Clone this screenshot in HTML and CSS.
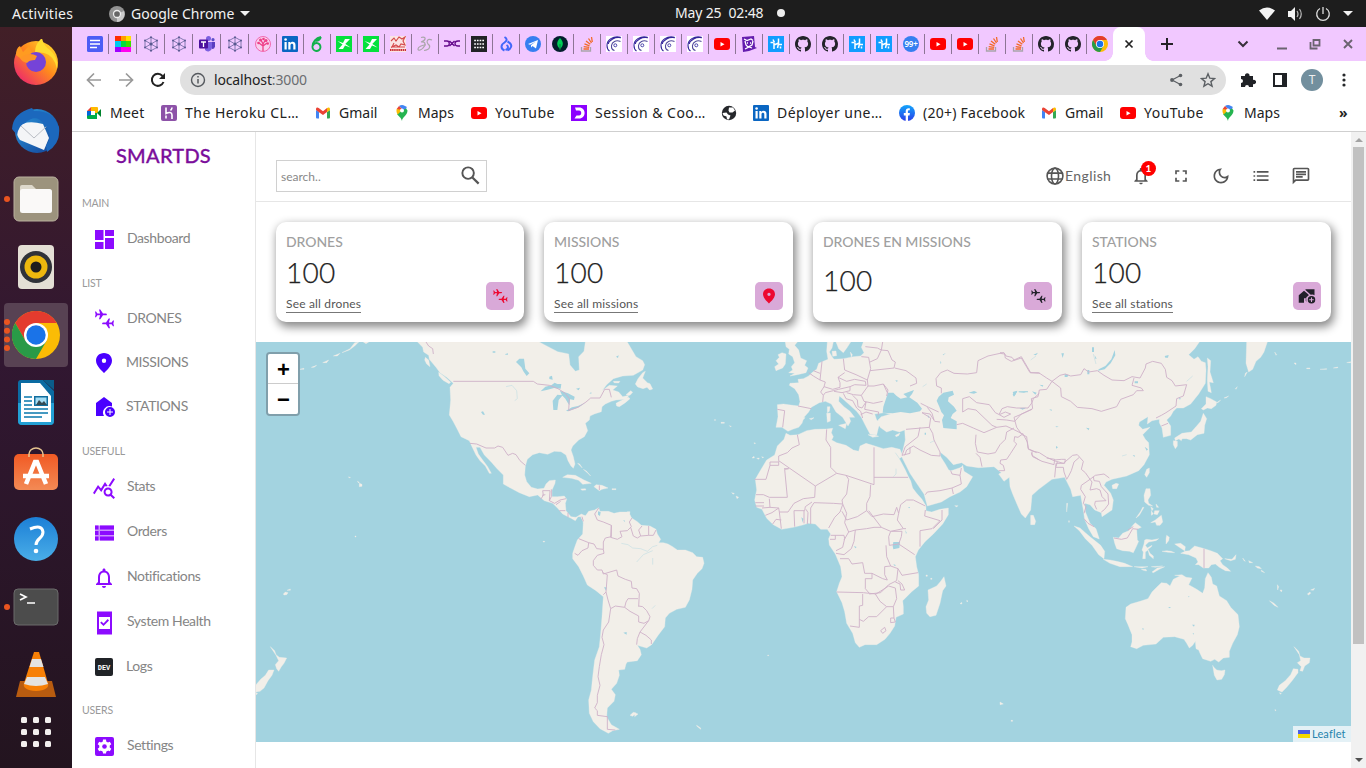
FILE: index.html
```
<!DOCTYPE html>
<html lang="en">
<head>
<meta charset="utf-8">
<title>SMARTDS</title>
<link rel="stylesheet" href="styles.css">
</head>
<body>
<svg class="defs" aria-hidden="true">
<defs>
<linearGradient id="gFox" x1="1" y1="0" x2="0" y2="1"><stop offset="0" stop-color="#ffe92e"/><stop offset=".45" stop-color="#ff8a1d"/><stop offset="1" stop-color="#e9127d"/></linearGradient>
<linearGradient id="gBird" x1="0" y1="0" x2="1" y2="1"><stop offset="0" stop-color="#2a9ae0"/><stop offset="1" stop-color="#123f94"/></linearGradient>
<linearGradient id="gShop" x1="0" y1="0" x2="0" y2="1"><stop offset="0" stop-color="#f15a24"/><stop offset="1" stop-color="#f38a55"/></linearGradient>
<linearGradient id="gHelp" x1="0" y1="0" x2="0" y2="1"><stop offset="0" stop-color="#1c7fd6"/><stop offset="1" stop-color="#4aaee8"/></linearGradient>
<linearGradient id="gFb" x1="0" y1="0" x2="0" y2="1"><stop offset="0" stop-color="#12a5fb"/><stop offset="1" stop-color="#2a3fe8"/></linearGradient>
<symbol id="docs" viewBox="0 0 16 16"><rect width="16" height="16" rx="1.5" fill="#4d5df5"/><path d="M3 4.500h10M3 8h10M3 11.500h7" stroke="#fff" stroke-width="1.600"/></symbol>
<symbol id="colors" viewBox="0 0 16 16"><path fill="#ff2d00" d="M0 0h6v5H0z"/><path fill="#ff9c00" d="M6 0h5v5H6z"/><path fill="#ffe000" d="M11 0h5v5h-5z"/><path fill="#00c8f0" d="M0 5h6v6H0z"/><path fill="#00e03c" d="M6 5h5v6H6z"/><path fill="#3ce000" d="M11 5h5v6h-5z"/><path fill="#a000ff" d="M0 11h6v5H0z"/><path fill="#ff00f0" d="M6 11h10v5H6z"/></symbol>
<symbol id="hex" viewBox="0 0 16 16"><path fill="none" stroke="#67669c" stroke-width=".8" d="M8 1.300l6 3.300v6.800l-6 3.300-6-3.300V4.600zM8 1v14M2 4.500l12 7M14 4.500l-12 7"/><g fill="#57588f"><circle cx="8" cy="8" r="1.500"/><circle cx="8" cy="1.300" r="1"/><circle cx="8" cy="14.700" r="1"/><circle cx="2" cy="4.500" r="1"/><circle cx="14" cy="4.500" r="1"/><circle cx="2" cy="11.500" r="1"/><circle cx="14" cy="11.500" r="1"/></g></symbol>
<symbol id="teams" viewBox="0 0 16 16"><circle cx="9.500" cy="2.600" r="2.500" fill="#7b5fe0"/><circle cx="14" cy="3.700" r="1.600" fill="#5b4dc8"/><path fill="#7b5fe0" d="M6 6h7v6a4 4 0 0 1-7 2z"/><path fill="#5b3dc0" d="M13 6h3v4.500a3 3 0 0 1-3 2.500z"/><rect y="3.500" width="9" height="9" rx="1" fill="#4b109e"/><path d="M2 6h5M4.500 6v5" stroke="#fff" stroke-width="1.300"/></symbol>
<symbol id="tree" viewBox="0 0 16 16"><circle cx="8" cy="8" r="7.500" fill="#f8d0f0" stroke="#f0509a" stroke-width=".8"/><path d="M8 15V7M8 10L4 7M8 10l4-3M8 8L6 4M8 8l2.500-4" stroke="#ee3f86" stroke-width="1.300"/><g fill="#ee3f86"><circle cx="3.500" cy="7" r="1.300"/><circle cx="5.500" cy="4" r="1.500"/><circle cx="8.500" cy="3" r="1.300"/><circle cx="11" cy="4.500" r="1.500"/><circle cx="12.700" cy="7.500" r="1.300"/></g></symbol>
<symbol id="linkedin" viewBox="0 0 16 16"><rect width="16" height="16" rx="1" fill="#0a66c2"/><path d="M2.500 6h2.200v7.500H2.500zM6.300 6h2v1.100C9.800 5 13.500 5.400 13.500 9v4.500h-2.200V9.300c0-2.100-2.800-2-2.800 0v4.200H6.300z" fill="#fff"/><circle cx="3.600" cy="3.500" r="1.300" fill="#fff"/></symbol>
<symbol id="leaf6" viewBox="0 0 16 16"><path d="M12 1C7 2 3.500 6 3.500 10.500a4 4 0 1 0 4-3.500c-2 0-3 1-3.700 2.500M6 4.500c2 .7 4.500-.5 6-3.500" fill="none" stroke="#13b04d" stroke-width="1.900"/></symbol>
<symbol id="greenN" viewBox="0 0 16 16"><path fill="#05e13d" d="M0 0h16v16H0z"/><path fill="#fff" d="M1.500 5l5.500 2 2-4h5L9.500 7.800 8 9.500zM14.500 11.500L9 9.500 7 13H2.500L6.500 8.500 8 7z"/></symbol>
<symbol id="lion" viewBox="0 0 16 16"><path fill="#fbe4e4" d="M0 0h16v16H0z"/><path d="M1 5l3-3 2 3 3-4 3 2 3-2-2 4 2 4-4-1-2 3-3-2-4 2 2-4M1 11h14" stroke="#d5494a" stroke-width="1.100" fill="none"/><path d="M0 14h16" stroke="#c92f32" stroke-width="2.200" stroke-dasharray="1.500 .6"/></symbol>
<symbol id="ds" viewBox="0 0 16 16"><path d="M4 1.500c6-1.500 5 3 0 4.500 5-.5 5 3 2 6-2 2.500-5 3-5 1 0-2 4-4 8-4M15 4c-5-2-6 2-4 4 3 2 2 6-4 6.500" fill="none" stroke="#aaa6ab" stroke-width="1.200"/></symbol>
<symbol id="dxc" viewBox="0 0 16 16"><path d="M0 5h3c3 0 3 5 0 5H0M5.500 5l5 5M10.500 5l-5 5M16 5h-2c-4 0-4 5 0 5h2" fill="none" stroke="#650a8c" stroke-width="1.300"/></symbol>
<symbol id="dots" viewBox="0 0 16 16"><path fill="#222326" d="M0 0h16v16H0z"/><path d="M3.200 4.500h10M3.200 8h10M3.200 11.500h10" stroke="#fff" stroke-width="1.700" stroke-dasharray="1.700 1"/></symbol>
<symbol id="flame" viewBox="0 0 16 16"><path d="M6.500 1c3.500 2 2 4 0 5.500-4 2.500-4 6 0 8M8.500 9c2.500 1.500 1.500 4-1 5M9.500 5.500c3 1.500 4.500 3 3.500 5.500-.6 1.800-2 2.800-3.500 3.300" fill="none" stroke="#4267fa" stroke-width="2"/></symbol>
<symbol id="telegram" viewBox="0 0 16 16"><circle cx="8" cy="8" r="8" fill="#367ff0"/><path fill="#fff" d="M3 8l10-4-2 8.500-3.500-2.500-1.500 1.500V9l5-3.500-6 3.200z"/></symbol>
<symbol id="mongo" viewBox="0 0 16 16"><circle cx="8" cy="8" r="8" fill="#031e2d"/><path fill="#00ce58" d="M8 2c4 4 3.500 8 0 11-3.500-3-4-7 0-11z"/><path d="M8 8v6" stroke="#087c40"/></symbol>
<symbol id="so" viewBox="0 0 16 16"><path d="M2.500 11v4h9v-4" fill="none" stroke="#a9a4aa" stroke-width="1.300"/><path d="M4.500 13h5.500M4.700 10.700l5.500.6M5.500 7.800l5 2M7 5l4.300 3.300M9.500 2.500l3 4.500M12.500 1l.8 5" stroke="#f26a28" stroke-width="1.300"/></symbol>
<symbol id="swirl" viewBox="0 0 16 16"><path fill="#fff" d="M0 0h16v16H0z"/><path d="M14.500 1.200C7-.5.8 4 1 9.500c0 2.500 1 4.500 2.500 5.500M15 1.800C9 .5 3 4 2.300 8" fill="none" stroke="#33249b" stroke-width="1.100"/><path d="M14.500 5.500C10 3.500 6 6 5.500 9.500c-.2 2.500 1 4.500 3 5" fill="none" stroke="#51499a" stroke-width="1.100"/><circle cx="9.300" cy="9.300" r="1.500" fill="none" stroke="#4d45ad"/></symbol>
<symbol id="yt" viewBox="0 0 16 16"><rect y="2" width="16" height="12" rx="3" fill="#f00"/><path fill="#fff" d="M6.500 6l4 2.200-4 2.300z"/></symbol>
<symbol id="dog" viewBox="0 0 16 16"><path fill="#641cae" d="M1 1l12-1 1 11 2 1-8 3-6 1z"/><path d="M3 3l3 1.500 4-1.500 2 1.500M4 5l1 4 2 2 4-2 1-4M6 7h1M9 7h1M4 13l4-2 3 1" fill="none" stroke="#fff" stroke-width="1.300"/></symbol>
<symbol id="hh" viewBox="0 0 16 16"><path fill="#119dff" d="M0 0h16v16H0z"/><path d="M5 3.500l1.500 3M6 7v6M2.500 6.500h3M6 9l4.500-2M10.500 2.500V8l-1 4M10.500 8.500H14M12.500 10.500v2" fill="none" stroke="#fff" stroke-width="1.500"/></symbol>
<symbol id="gh" viewBox="0 0 16 16"><path fill="#24242b" d="M8 0C3.580 0 0 3.580 0 8c0 3.540 2.290 6.530 5.470 7.590.4.070.55-.17.55-.38 0-.19-.01-.82-.01-1.490-2.010.37-2.530-.49-2.690-.94-.09-.23-.48-.94-.82-1.130-.28-.15-.68-.52-.01-.53.63-.01 1.080.58 1.230.82.72 1.210 1.870.87 2.330.66.07-.52.28-.87.51-1.070-1.780-.2-3.640-.89-3.640-3.950 0-.87.31-1.590.82-2.150-.08-.2-.36-1.020.08-2.120 0 0 .67-.21 2.200.82.64-.18 1.320-.27 2-.27s1.360.09 2 .27c1.530-1.040 2.200-.82 2.200-.82.44 1.100.16 1.920.08 2.120.51.56.82 1.270.82 2.150 0 3.070-1.870 3.750-3.650 3.950.29.25.54.73.54 1.480 0 1.070-.01 1.930-.01 2.200 0 .21.15.46.55.38A8.010 8.010 0 0 0 16 8c0-4.420-3.580-8-8-8z"/></symbol>
<symbol id="chrome" viewBox="0 0 48 48"><circle cx="24" cy="24" r="24" fill="#fbbc05"/><path fill="#e33b2e" d="M3.200 12A24 24 0 0 1 44.800 12H24L13.600 30z"/><path fill="#299a47" d="M3.200 12A24 24 0 0 0 24 48l10.400-18H13.600z"/><circle cx="24" cy="24" r="12" fill="#fff"/><circle cx="24" cy="24" r="9.700" fill="#1a73e8"/></symbol>
<symbol id="meet" viewBox="0 0 16 16"><path fill="#00ac47" d="M1 7h10v7H2a1 1 0 0 1-1-1z"/><path fill="#ffba00" d="M5 2h6a1 1 0 0 1 1 1v5H5z"/><path fill="#ea4335" d="M1 6l4-4v4z"/><path fill="#0066da" d="M1 6h4v4l-4 1z"/><path fill="#00832d" d="M11 8l4-4v8z"/><path fill="#fff" d="M5 6h4v4H5z"/></symbol>
<symbol id="heroku" viewBox="0 0 16 16"><rect width="16" height="16" rx="2" fill="#8d52a8"/><path d="M5 2.500v6c3-1.500 6-1.500 6 1.500v4M11 2.500c0 1.500-.5 2-1.500 3M5 10.500v3" stroke="#fff" stroke-width="1.600" fill="none"/></symbol>
<symbol id="gmail" viewBox="0 0 16 16"><path fill="#4285f4" d="M1 5l3 2v6.500H2a1 1 0 0 1-1-1z"/><path fill="#34a853" d="M15 5l-3 2v6.500h2a1 1 0 0 0 1-1z"/><path fill="#ea4335" d="M1 4c0-1.500 1.500-2 2.700-1L8 6.200 12 3v4L8 10 4 7.200 1 5z"/><path fill="#fbbc04" d="M12 3c1.500-1.200 3-.5 3 1v1l-3 2.300z"/></symbol>
<symbol id="maps" viewBox="0 0 16 16"><path fill="#25b450" d="M8 16c0-4 5.500-5.500 5.500-10.500L11 2 3 9c2 3 4 3 5 7z"/><path fill="#4285f4" d="M5 1a5.500 5.500 0 0 1 8 2l-4 2z"/><path fill="#ea4335" d="M2.700 4L5 1l3 3-3 3z"/><path fill="#fbbc04" d="M2.700 4c-.6 2.500 0 4 1 5.500L8 5z"/><circle cx="8" cy="5.500" r="2" fill="#fff"/></symbol>
<symbol id="session" viewBox="0 0 16 16"><path fill="#8c00ff" d="M0 0h16v16H0z"/><path fill="#fff" d="M4 2.500h4c7.500 0 7.500 11 0 11H3.500l2-3H8c3-.3 3-4.700 0-5H5z"/></symbol>
<symbol id="globe" viewBox="0 0 16 16"><circle cx="8" cy="8" r="7.200" fill="#25272b"/><path d="M1.500 8l4-.5 1.500 2 2.500 1-1.500 4-2-.3-.5-2.700-3-1zM8 2.500l4 0 2 3-2.500 2h-3l-1-2z" fill="#fff"/></symbol>
<symbol id="facebook" viewBox="0 0 16 16"><circle cx="8" cy="8" r="8" fill="url(#gFb)"/><path fill="#fff" d="M6.700 16v-5.500H4.800V8h1.900V6.300c0-2.200 1.500-3.500 4.100-3v2c-1.300-.2-1.900.1-1.900 1.200V8h2l-.4 2.500H9V16z"/></symbol>
<symbol id="planes" viewBox="0 0 24 24"><path d="M3 4.600h1l1.400 1.900h2.700L7 2.500h1.300l2.700 4h2.600q1.300.1 1.300.9t-1.300.9H11l-2.700 4H7l1.100-4H5.400L4 10.200H3l.6-2.800z"/><path d="M22 13.600h-1l-1.400 1.900h-2.700l1.100-4h-1.300l-2.700 4h-2.600q-1.300.1-1.300.9t1.300.9H14l2.700 4H18l-1.100-4h2.700l1.400 1.900h1l-.6-2.800z"/></symbol>
<symbol id="pin" viewBox="0 0 24 24"><path d="M12 2C7 2 4 5.600 4 9.800 4 15.400 12 22 12 22s8-6.600 8-12.200C20 5.600 17 2 12 2zm0 10a2.200 2.200 0 1 1 0-4.400 2.200 2.200 0 0 1 0 4.400z"/></symbol>
<symbol id="homeplus" viewBox="0 0 24 24"><path d="M4 8l8-6 8 6v3.600a6.500 6.500 0 0 0-8 9.400H4z"/><path fill-rule="evenodd" d="M18 12a5 5 0 1 0 0 10 5 5 0 0 0 0-10zm3 5.500h-2.500V20h-1v-2.500H15v-1h2.500V14h1v2.500H21z"/></symbol>
<symbol id="bell" viewBox="0 0 24 24"><path d="M12 22c1.100 0 2-.9 2-2h-4c0 1.100.9 2 2 2zm6-6v-5c0-3.070-1.630-5.640-4.500-6.320V4c0-.83-.67-1.500-1.500-1.500s-1.500.67-1.500 1.500v.68C7.640 5.360 6 7.920 6 11v5l-2 2v1h16v-1l-2-2zm-2 1H8v-6c0-2.480 1.510-4.500 4-4.500s4 2.020 4 4.500v6z"/></symbol>
</defs>
</svg>

<div class="desktop">
<header class="panel">
  <span class="activities">Activities</span>
  <svg class="panel-app" viewBox="0 0 16 16"><circle cx="8" cy="8" r="8" fill="#929292"/><path fill="#c9c9c9" d="M8 8L15 5a8 8 0 0 1-7 11z"/><circle cx="8" cy="8" r="3.500" fill="#666" stroke="#eee" stroke-width="1.300"/></svg>
  <span class="app-name">Google Chrome</span><i class="caret"></i>
  <div class="clock"><span>May 25&nbsp; 02:48</span><b></b></div>
  <div class="tray">
    <svg width="16" height="14" viewBox="0 0 16 14"><path fill="#f3f3f3" d="M0 3.500q8-6 16 0L8 13z"/></svg>
    <svg width="16" height="16" viewBox="0 0 16 16"><path fill="#f3f3f3" d="M1 5h3l4-4v14l-4-4H1z"/><path d="M10 5q2 3 0 6M12.500 3q3.500 5 0 10" fill="none" stroke="#bbb" stroke-width="1.200"/></svg>
    <svg width="16" height="16" viewBox="0 0 16 16"><path d="M5 2.500a6.300 6.300 0 1 0 6 0M8 1v7" fill="none" stroke="#ddd" stroke-width="1.300"/></svg>
    <i class="caret"></i>
  </div>
</header>

<div class="workspace">
<nav class="dock">
  <div class="dock-item"><svg viewBox="0 0 48 48"><circle cx="24" cy="24" r="22" fill="url(#gFox)"/><path fill="#ff9b21" d="M4 16Q4 9 8 7l3 6 6-6 3 7-8 8z"/><path fill="#ffdc30" d="M23 13Q23 5 30-1q1 7 8 12 9 8 7 19Q42 16 32 14z"/><circle cx="24" cy="23" r="10" fill="#7543d8"/><path fill="#ff9626" d="M8 19q9-7 17-2l-2 4q-6 0-8 3-5-1-7-5z"/></svg></div>
  <div class="dock-item"><svg viewBox="0 0 48 48"><circle cx="25" cy="24" r="22" fill="url(#gBird)"/><path fill="#f4f5f7" d="M5 21q8-9 26-4l6 14-5 12L8 33q-4-5-3-12z"/><path d="M9 19l13 12 13-12" fill="none" stroke="#b9bdc4"/><path fill="#1c68bd" d="M0 22Q1 6 20 1l2 3q18-1 25 16 2 17-12 25l-1-6q8-12-2-22Q24 6 13 16q-6 2-8 12z"/></svg></div>
  <div class="dock-item on1"><svg viewBox="0 0 48 48"><rect x="2" y="2" width="44" height="44" rx="5" fill="#9c937d" stroke="#b9b09e"/><path fill="#ddd8cb" d="M8 12q0-2 2-2h10l4 4v6H8z"/><rect x="8" y="14" width="32" height="24" rx="2.500" fill="#faf9f8"/></svg></div>
  <div class="dock-item"><svg viewBox="0 0 48 48"><rect x="6" y="2" width="36" height="44" rx="4" fill="#e4dfd5"/><circle cx="24" cy="24" r="16" fill="#303239"/><circle cx="24" cy="24" r="11.500" fill="#edb80e"/><circle cx="24" cy="24" r="5.500" fill="#1d1d1d"/></svg></div>
  <div class="dock-item active on4"><svg viewBox="0 0 48 48"><use href="#chrome"/></svg></div>
  <div class="dock-item"><svg viewBox="0 0 48 48"><path fill="#0b6ba2" d="M9 1h22l11 11v30q0 4-4 4H10q-4 0-4-4V4q0-3 3-3z"/><path fill="#23a0d5" d="M6 24h36v18q0 4-4 4H10q-4 0-4-4z"/><path fill="#fff" d="M9 4h19l11 13v26H9z"/><path fill="#0b5d8a" d="M31 1h11v10z"/><path d="M12 18h8M12 22h8M12 26h8M12 30h24M12 34h24M12 38h18" stroke="#0878ad" stroke-width="1.700"/><path fill="#116e9e" d="M22 17h14v10H22z"/><path fill="#a5ddf4" d="M23.500 18.500h11v7h-11z"/><path fill="#344b54" d="M24 26l3-5 3 3 2-2 3 4z"/></svg></div>
  <div class="dock-item shop"><svg viewBox="0 0 48 48"><rect x="2" y="9" width="44" height="36" rx="5" fill="url(#gShop)"/><path d="M17 12V9a7 6 0 0 1 14 0v3" fill="none" stroke="#e7c58f" stroke-width="1.500"/><path d="M14 39l9-22h2l9 22M11 31h26" fill="none" stroke="#fff" stroke-width="4.500"/></svg></div>
  <div class="dock-item"><svg viewBox="0 0 48 48"><circle cx="24" cy="24" r="22" fill="url(#gHelp)"/><path d="M18 14q12-5 13 3c0 7-7 6-7 13" fill="none" stroke="#fff" stroke-width="3"/><circle cx="24" cy="36" r="2.300" fill="#fff"/></svg></div>
  <div class="dock-item on1"><svg viewBox="0 0 48 48"><rect x="2" y="6" width="44" height="36" rx="4" fill="#4c4c4c" stroke="#6b6b6b"/><path d="M8 11l6 3-6 3M15 20h8" fill="none" stroke="#fff" stroke-width="1.700"/></svg></div>
  <div class="dock-item"><svg viewBox="0 0 48 48"><path fill="#b85c10" d="M8 30h32l4 16H4z"/><path fill="#f78006" d="M22 1h5l9 31q2 7-12 8-14-1-12-8z"/><path fill="#e4e3e0" d="M20 8h9l2.500 8h-14zM15 26h18l3 7q-12 4-24 0z"/></svg></div>
  <div class="apps"><i></i><i></i><i></i><i></i><i></i><i></i><i></i><i></i><i></i></div>
</nav>

<main class="browser">
<div class="tabs">
<div class="tab w"><svg><use href="#docs"/></svg></div><div class="tab w"><svg><use href="#colors"/></svg></div><div class="tab w"><svg><use href="#hex"/></svg></div><div class="tab w"><svg><use href="#hex"/></svg></div><div class="tab w"><svg><use href="#teams"/></svg></div><div class="tab w"><svg><use href="#hex"/></svg></div><div class="tab w"><svg><use href="#tree"/></svg></div>
<div class="tab"><svg><use href="#linkedin"/></svg></div><div class="tab"><svg><use href="#leaf6"/></svg></div><div class="tab"><svg><use href="#greenN"/></svg></div><div class="tab"><svg><use href="#greenN"/></svg></div><div class="tab"><svg><use href="#lion"/></svg></div><div class="tab"><svg><use href="#ds"/></svg></div><div class="tab"><svg><use href="#dxc"/></svg></div><div class="tab"><svg><use href="#dots"/></svg></div><div class="tab"><svg><use href="#flame"/></svg></div><div class="tab"><svg><use href="#telegram"/></svg></div><div class="tab"><svg><use href="#mongo"/></svg></div><div class="tab"><svg><use href="#so"/></svg></div><div class="tab"><svg><use href="#swirl"/></svg></div><div class="tab"><svg><use href="#swirl"/></svg></div><div class="tab"><svg><use href="#swirl"/></svg></div><div class="tab"><svg><use href="#swirl"/></svg></div><div class="tab"><svg><use href="#yt"/></svg></div><div class="tab"><svg><use href="#dog"/></svg></div><div class="tab"><svg><use href="#hh"/></svg></div><div class="tab"><svg><use href="#gh"/></svg></div><div class="tab"><svg><use href="#gh"/></svg></div><div class="tab"><svg><use href="#hh"/></svg></div><div class="tab"><svg><use href="#hh"/></svg></div><div class="tab"><span class="count">99+</span></div><div class="tab"><svg><use href="#yt"/></svg></div><div class="tab"><svg><use href="#yt"/></svg></div><div class="tab"><svg><use href="#so"/></svg></div><div class="tab"><svg><use href="#so"/></svg></div><div class="tab"><svg><use href="#gh"/></svg></div><div class="tab"><svg><use href="#gh"/></svg></div><div class="tab last"><svg><use href="#chrome"/></svg></div>
<div class="tab-open"><svg viewBox="0 0 16 16"><path d="M4.500 4.500l7 7M11.500 4.500l-7 7" stroke="#222" stroke-width="1.700"/></svg></div>
<svg class="newtab" viewBox="0 0 16 16"><path d="M8 2v12M2 8h12" stroke="#252128" stroke-width="2"/></svg>
<div class="winctl"><svg viewBox="0 0 16 16"><path d="M3.500 5.500L8 10l4.500-4.500" fill="none" stroke="#37303a" stroke-width="2"/></svg><svg viewBox="0 0 16 16"><path d="M3 12.500h10" stroke="#6b6370" stroke-width="2"/></svg><svg viewBox="0 0 16 16"><path d="M6.500 4h6v5.500h-6zM3.500 6v6.500h7" fill="none" stroke="#6b6370" stroke-width="1.800"/></svg><svg viewBox="0 0 16 16"><path d="M4 4l8 8M12 4l-8 8" stroke="#6b6370" stroke-width="1.900"/></svg></div>
</div>

<div class="toolbar">
<svg viewBox="0 0 16 16"><path d="M15 8H2M8 1.500L1.500 8 8 14.500" fill="none" stroke="#999" stroke-width="1.700"/></svg>
<svg viewBox="0 0 16 16"><path d="M1 8h13M8 1.500L14.500 8 8 14.500" fill="none" stroke="#999" stroke-width="1.700"/></svg>
<svg viewBox="0 0 16 16"><path d="M13.500 10A6 6 0 1 1 12.500 4" fill="none" stroke="#222" stroke-width="2"/><path fill="#222" d="M15 1v6H9z"/></svg>
<div class="omnibox"><svg viewBox="0 0 16 16"><circle cx="8" cy="8" r="6.500" fill="none" stroke="#55595e" stroke-width="1.400"/><path d="M8 7v4.500M8 4v1.500" stroke="#55595e" stroke-width="1.500"/></svg><span class="url">localhost<i>:3000</i></span>
<svg class="share" viewBox="0 0 16 16"><path d="M12.500 3.500L4 8l8.500 4.500" fill="none" stroke="#5b5f63" stroke-width="1.200"/><g fill="#5b5f63"><circle cx="12.500" cy="3.500" r="1.800"/><circle cx="4" cy="8" r="1.900"/><circle cx="12.500" cy="12.500" r="1.800"/></g></svg><svg viewBox="0 0 16 16"><path d="M8 1.800l1.800 4.400 4.700.4-3.600 3 1.200 4.600L8 11.700l-4.100 2.500 1.200-4.600-3.600-3 4.700-.4z" fill="none" stroke="#5b5f63" stroke-width="1.400"/></svg></div>
<svg class="puzzle" viewBox="0 0 16 16"><path fill="#202226" d="M1 4h4a2.300 2.300 0 1 1 4.500 0H13v4a2.200 2.200 0 1 1 0 4v3H9a2 2 0 0 0-4 0H1v-4a2 2 0 0 0 0-4z"/></svg>
<svg class="side" viewBox="0 0 16 16"><path fill="#202226" d="M1 1h14v14H1z"/><path fill="#fff" d="M3 3h7v10H3z"/></svg>
<span class="avatar">T</span>
<svg class="more" viewBox="0 0 16 16"><g fill="#26282b"><circle cx="8" cy="3" r="1.600"/><circle cx="8" cy="8" r="1.600"/><circle cx="8" cy="13" r="1.600"/></g></svg>
</div>

<div class="bookmarks">
<a class="bm b75"><svg><use href="#meet"/></svg><span class="wide">Meet</span></a><a class="bm b154"><svg><use href="#heroku"/></svg><span class="wider">The Heroku CL…</span></a><a class="bm b79"><svg><use href="#gmail"/></svg><span>Gmail</span></a><a class="bm b77"><svg><use href="#maps"/></svg><span>Maps</span></a><a class="bm b100"><svg><use href="#yt"/></svg><span class="wider">YouTube</span></a><a class="bm b150"><svg><use href="#session"/></svg><span class="wider">Session &amp; Coo…</span></a><a class="bm b32"><svg><use href="#globe"/></svg></a><a class="bm b146"><svg><use href="#linkedin"/></svg><span class="wider">Déployer une…</span></a><a class="bm b142"><svg><use href="#facebook"/></svg><span class="wide">(20+) Facebook</span></a><a class="bm b79"><svg><use href="#gmail"/></svg><span>Gmail</span></a><a class="bm b100"><svg><use href="#yt"/></svg><span class="wider">YouTube</span></a><a class="bm b77"><svg><use href="#maps"/></svg><span>Maps</span></a><b class="overflow">»</b>
</div>

<div class="page">
<aside class="sidebar">
  <div class="brand">SMARTDS</div>
  <h4>MAIN</h4>
  <div class="item"><svg viewBox="0 0 24 24"><path d="M3 3h8.500v10H3zM13 3h9v6h-9zM3 15h8.500v7H3zM13 11h9v11h-9z"/></svg><span>Dashboard</span></div>
  <h4>LIST</h4>
  <div class="item"><svg><use href="#planes"/></svg><span>DRONES</span></div>
  <div class="item blue"><svg><use href="#pin"/></svg><span>MISSIONS</span></div>
  <div class="item blue"><svg><use href="#homeplus"/></svg><span>STATIONS</span></div>
  <h4>USEFULL</h4>
  <div class="item tall"><svg viewBox="0 0 24 24"><path d="M19.880 18.470c.44-.7.7-1.510.7-2.390 0-2.490-2.010-4.500-4.500-4.500s-4.500 2.010-4.500 4.500 2.010 4.500 4.490 4.500c.88 0 1.700-.26 2.390-.7L21.580 23 23 21.580l-3.120-3.110zm-3.800.11c-1.380 0-2.500-1.120-2.500-2.500s1.120-2.500 2.500-2.500 2.500 1.120 2.500 2.500-1.120 2.500-2.500 2.500zm-.36-8.500c-.74.02-1.450.18-2.100.45l-.55-.83-3.800 6.180-3.010-3.520-3.630 5.810L1 17l5-8 3 3.500L13 6l2.720 4.080zm2.590.5c-.64-.28-1.330-.45-2.050-.49L21.380 2 23 3.180l-4.690 7.400z"/></svg><span>Stats</span></div>
  <div class="item tall"><svg viewBox="0 0 24 24"><g opacity=".45"><path d="M3 4.500h19v15H3z"/></g><path d="M3 4.500h3.500v4H3zM8 4.500h14v4H8zM3 10h3.500v4H3zM8 10h14v4H8zM3 15.500h3.500v4H3zM8 15.500h14v4H8z"/></svg><span>Orders</span></div>
  <div class="item tall"><svg viewBox="0 0 24 24"><use href="#bell"/></svg><span>Notifications</span></div>
  <div class="item tall"><svg viewBox="0 0 24 24"><path fill-rule="evenodd" d="M5 .5h15v23H5zM7 6v12h11V6zM17 9.500L11.500 15l-3.300-3.300 1.300-1.300 2 2L15.700 8z"/></svg><span>System Health</span></div>
  <div class="item dev"><svg viewBox="0 0 24 24"><rect x="3" y="3" width="18" height="18" rx="2" fill="#202327"/><text x="12" y="14.500" text-anchor="middle">DEV</text></svg><span>Logs</span></div>
  <h4 class="users">USERS</h4>
  <div class="item"><svg viewBox="0 0 24 24"><rect x="3" y="3" width="19" height="19" rx="2"/><g fill="#fff" transform="translate(.5 .5)"><circle cx="12" cy="12" r="5.200"/><path id="cog" d="M10.500 5h3l.5 4h-4zM10.500 19h3l.5-4h-4z"/><path d="M10.500 5h3l.5 4h-4zM10.500 19h3l.5-4h-4z" transform="rotate(60 12 12)"/><path d="M10.500 5h3l.5 4h-4zM10.500 19h3l.5-4h-4z" transform="rotate(120 12 12)"/></g><circle cx="12.500" cy="12.500" r="2.300"/></svg><span>Settings</span></div>
</aside>

<section class="content">
  <div class="navbar">
    <div class="search"><span>search..</span><svg viewBox="0 0 24 24"><circle cx="9.500" cy="9.500" r="6" fill="none" stroke="#555" stroke-width="2"/><path d="M14 14l6.500 6.500" stroke="#555" stroke-width="2.300"/></svg></div>
    <div class="actions">
      <div class="lang"><svg viewBox="0 0 24 24"><g fill="none" stroke="#555" stroke-width="1.900"><circle cx="12" cy="12" r="9.500"/><ellipse cx="12" cy="12" rx="4.200" ry="9.500"/><path d="M3 8.500h18M3 15.500h18"/></g></svg><span>English</span></div>
      <div class="alert"><svg><use href="#bell"/></svg><b>1</b></div>
      <svg viewBox="0 0 24 24"><path d="M7 14H5v5h5v-2H7v-3zm-2-4h2V7h3V5H5v5zm12 7h-3v2h5v-5h-2v3zM14 5v2h3v3h2V5h-5z"/></svg>
      <svg viewBox="0 0 24 24"><path d="M9.370 5.510c-.18.64-.27 1.310-.27 1.990 0 4.080 3.320 7.400 7.400 7.400.68 0 1.350-.09 1.990-.27C17.450 17.190 14.930 19 12 19c-3.860 0-7-3.140-7-7 0-2.930 1.810-5.450 4.370-6.490zM12 3c-4.970 0-9 4.030-9 9s4.030 9 9 9 9-4.030 9-9c0-.46-.04-.92-.1-1.360-.98 1.370-2.580 2.260-4.400 2.260-2.980 0-5.400-2.420-5.400-5.400 0-1.810.89-3.420 2.260-4.400C12.920 3.040 12.460 3 12 3z"/></svg>
      <svg viewBox="0 0 24 24"><path d="M3 6h2v2H3zM3 11h2v2H3zM3 16h2v2H3zM7 6h14v2H7zM7 11h14v2H7zM7 16h14v2H7z"/></svg>
      <svg viewBox="0 0 24 24"><path d="M4 4h16v12H5.170L4 17.170V4m0-2c-1.100 0-1.990.9-1.990 2L2 22l4-4h14c1.100 0 2-.9 2-2V4c0-1.100-.9-2-2-2H4zm2 10h8v2H6v-2zm0-3h12v2H6V9zm0-3h12v2H6V6z"/></svg>
    </div>
  </div>

  <div class="cards">
    <article class="card"><div class="info"><h3>DRONES</h3><strong>100</strong><a>See all drones</a></div><div class="badge red"><svg><use href="#planes"/></svg></div></article>
    <article class="card"><div class="info"><h3>MISSIONS</h3><strong>100</strong><a>See all missions</a></div><div class="badge red"><svg><use href="#pin"/></svg></div></article>
    <article class="card"><div class="info"><h3>DRONES EN MISSIONS</h3><strong class="low">100</strong></div><div class="badge"><svg><use href="#planes"/></svg></div></article>
    <article class="card"><div class="info"><h3>STATIONS</h3><strong>100</strong><a>See all stations</a></div><div class="badge"><svg viewBox="0 0 24 24"><path d="M1 11l7-6 6 5v1.500a6 6 0 0 0-3 8.500V15H8v6H1zM10 3h12v8q-2-1.500-5-.7L10 4z"/><path fill-rule="evenodd" d="M18 12a5 5 0 1 0 0 10 5 5 0 0 0 0-10zm3 5.700h-2.300V20h-1.400v-2.300H15v-1.400h2.300V14h1.400v2.300H21z"/></svg></div></article>
  </div>

  <div class="map">
  <svg class="world" viewBox="0 6 3285 1200">
  <g class="land">
    <!-- North America and the Pacific -->
    <path d="M485 6L500 22 503 36 518 46 520 58 540 82 552 98 572 112 592 130 582 142 584 180 580 225 592 245 605 270 615 290 640 302 648 320 660 345 672 362 688 378 700 400 706 400 695 380 680 360 667 342 660 322 672 322 685 345 705 365 722 385 742 405 742 432 765 445 790 458 820 470 845 465 865 482 890 490 905 505 920 522 945 535 958 542 966 530 978 530 982 548 990 528 976 522 960 532 945 530 930 512 928 490 932 478 925 468 905 470 888 470 888 450 897 430 898 420 880 422 870 432 864 445 845 447 826 442 812 425 806 405 808 378 814 358 830 344 850 338 875 343 895 334 915 335 930 345 936 362 945 378 952 385 957 372 952 350 945 330 950 318 968 300 985 290 995 272 988 250 1000 240 1002 228 1015 222 1036 215 1038 200 1048 192 1066 184 1080 180 1112 178 1118 166 1100 170 1088 156 1070 150 1084 138 1060 136 1038 152 1052 134 1072 116 1100 108 1132 106 1160 90 1166 74 1160 62 1140 50 1128 30 1114 6 988 6 984 34 968 50 970 90 958 94 942 75 938 42 905 35 865 14 850 6z"/>
    <path d="M1138 132l8-16 14-18 8-4-8 20 14 14 8 3 8 16-9 3-8-8-12 4-16-5zM508 52l10 8 4 20-10-8-6-12zM548 97l16 12 20 18-5 4-18-10-12-14zM1080 190l14-8 24-10 4 4-14 12-18 12-8-2zM1072 124l20 0-4 5-14-1zM1110 164l14-12 6 5-8 9z"/>
    <path d="M920 412l14-8 24 2 26 14 22 10-26 3-12-12-22-6zM1014 440l6-6 18 2 18 8-18 4-8 4zM974 447l14-1 2 4-12 1zM1068 446h12v3h-12zM1114 515l8 0-1 6-6 1zM965 370l6 2 8 12-6-6zM982 388l10 6 12 14-10-10z"/>
    <path d="M310 430l8 3 0 6-8 1zM304 424l6 3-2 2zM277 411l6 1-1 2zM82 762l6-6 8 2-4 6-8 1zM93 751l10-4v4zM43 920L56 932 60 944 70 952 92 954 84 970 76 980 68 994 62 986 58 974 68 962 60 946zM0 1034L14 1018 28 1006 38 990 54 990 48 1006 36 1022 24 1044 12 1054 0 1056zM0 1058l5 3-5 3zM130 88l14-3 0 3zM166 82l16-6-8 6zM200 68l18-8-6 8zM232 48l20-8-8 8zM258 38L282 26 296 8 308 6 296 18 280 30zM322 6l16 0-8 5zM297 588h3v3h-3z"/>
    <path d="M1122 1126l10-9 8 2-10 10zM1136 1118l10 4-10 8z"/>
    <!-- South America and Atlantic islands -->
    <g transform="translate(852)">
    <path d="M122 530L136 528 146 514 164 510 176 503 180 514 205 514 222 520 240 516 266 516 275 534 292 545 304 556 330 558 348 568 352 582 362 598 356 608 370 608 384 612 398 620 412 630 436 630 458 638 470 650 488 652 492 670 486 686 472 700 458 720 456 748 448 780 436 802 410 808 388 820 376 834 374 860 355 885 335 914 320 924 292 916 300 928 304 944 292 962 262 966 258 972 254 988 236 990 238 1006 230 1030 214 1048 226 1064 222 1084 202 1104 200 1130 214 1154 238 1168 218 1172 205 1180 180 1166 160 1145 148 1120 146 1080 154 1050 158 1010 164 960 178 920 182 880 186 830 190 770 168 752 142 735 130 708 116 680 98 656 98 640 104 622 112 600 128 582 130 545z"/>
    <path d="M470 1156l12 8 0 4-12-10zM523 239h4v2h-4zM543 247l10 0v3h-10zM568 257l6 2-3 1zM642 308l5 2-4 1zM636 354l6-5 1 5zM650 355l8-1-2 4zM665 350l6 2-3 2zM575 458l8 2-3 3zM588 468l8 4-5 4zM9 604h5v2H9zM683 945h3v2h-3z"/>
    </g>
    <!-- Europe, Africa and mainland Asia -->
    <g transform="translate(1452)">
    <path d="M136 6L138 20 148 28 146 42 158 50 164 68 154 80 158 90 146 98 164 100 150 108 172 104 198 98 204 84 194 76 200 62 182 54 176 30 164 16 172 6zM114 44L126 38 138 42 136 72 128 84 108 92 104 80 116 72 108 62 118 52zM262 200l8 0-2 14-6 4zM260 220l11-1 0 24-9 4zM296 256L320 250 316 266zM384 284l18 0 14 5-18 3zM466 286l14-7-4 8-8 3zM187 236l8-4-3 6zM208 236l14-3-8 6zM288 6L332 6 322 22 310 38 296 26zM276 34l12-1 2 14-12 2zM331 36l6 8-3 8z"/>
    <path d="M138 280L150 286 174 284 200 272 225 268 260 267 278 265 274 278 280 290 275 300 290 308 318 316 340 330 356 334 360 318 378 310 398 316 430 326 455 322 480 328 488 348 478 356 496 390 506 412 512 422 518 444 530 460 546 478 558 498 558 512 575 516 600 508 625 504 625 524 608 552 580 582 555 605 535 630 526 650 530 680 536 704 536 738 515 755 488 782 490 800 490 822 468 832 464 858 450 880 435 898 410 914 375 914 358 922 346 908 338 880 320 850 314 815 306 788 290 755 298 730 306 710 302 680 286 642 268 615 266 596 272 582 262 568 242 568 226 552 205 550 185 556 160 562 125 568 100 554 80 535 66 508 50 502 44 480 50 450 46 418 62 390 80 360 104 345 112 318 132 298z"/>
    <path d="M612 710L618 738 608 752 600 790 588 826 570 830 560 820 558 800 566 780 564 750 590 738 602 724zM872 526L880 526 887 544 884 554 872 554zM644 497l10 0-4 4zM558 705h4v4h-4zM572 715h4v3h-4zM660 791l5-4 1 5zM680 781l4 2-3 3z"/>
    <path d="M112 194L130 192 158 196 176 198 180 185 176 164 164 146 148 136 150 130 176 128 174 118 190 116 206 108 218 96 230 88 236 70 250 64 264 58 260 34 262 6 280 6 276 24 268 36 276 50 282 58 310 56 340 50 362 48 372 38 364 22 370 6 1378 6 1364 26 1346 44 1362 58 1374 50 1384 64 1396 68 1398 90 1396 130 1376 162 1352 192 1330 204 1310 204 1300 214 1292 228 1280 240 1292 258 1292 286 1270 292 1266 264 1258 248 1258 238 1236 242 1222 252 1224 230 1198 246 1196 256 1208 268 1230 262 1208 284 1216 298 1226 308 1228 344 1212 374 1196 392 1160 408 1116 418 1098 426 1092 436 1112 460 1120 480 1116 510 1086 530 1084 518 1064 510 1050 494 1034 490 1036 515 1050 550 1068 566 1078 597 1060 590 1046 566 1034 538 1030 510 1022 466 998 470 992 448 974 412 936 418 896 448 876 466 872 510 856 534 844 522 832 495 818 462 810 440 808 412 792 424 776 402 784 398 762 380 716 383 680 378 665 368 640 374 620 352 600 336 602 350 616 372 626 390 632 392 640 390 664 382 668 376 672 394 698 410 680 440 660 456 630 470 604 486 562 498 552 462 530 430 510 400 498 376 484 348 490 325 496 300 494 270 478 276 458 270 440 276 420 262 414 240 424 230 452 222 432 218 404 222 410 240 424 250 416 260 410 285 390 282 376 256 364 232 350 214 330 196 308 176 298 168 296 184 312 200 330 214 344 232 328 232 332 244 324 258 318 248 308 232 288 216 274 192 256 184 238 188 214 202 206 216 192 232 186 250 176 262 158 268 144 274 126 262 108 262 114 230z"/>
    </g>
    <!-- East Asian islands, Indonesia, Oceania -->
    <g transform="translate(2232)">
    <path d="M622 54l10 8-2 34 10 32-12-2 6 32-10-4-2-34 2-40zM618 170L632 176 650 186 648 196 634 206 622 204 610 210 604 206 618 192zM610 220L620 236 614 256 612 280 592 284 572 300 560 296 538 296 526 302 524 294 546 280 574 276 590 258 602 244zM520 302l12 2 0 14-6 8-6-12zM536 296l12-4-4 10zM740 6L802 6 792 36 782 52 768 64 758 88 746 96 738 70zM736 100l6-4-8 14zM650 188l12-8-8 8zM672 174l14-6-8 6zM706 146l6-6-4 8zM824 36l6 8-2 2zM882 69h6l0 5zM920 84h10v2h-10zM960 88l20-2v2h-20zM1000 84l14-3-2 3zM1040 68l12-3v3zM448 384l0 14-8 14-6-8 6-16zM336 436l12-6 8 2-6 14-12 0zM438 446L450 446 452 466 444 480 446 490 458 498 446 496 434 486 432 466zM452 500l8 6-4 6zM464 512l14 0-6 12-10-2zM468 492l8 10-6 0zM454 512l6 10-6 4zM466 540L484 526 488 546 480 556 470 556 466 546 452 548zM428 502l4 0-14 24-10 8 14-20z"/>
    <path d="M222 558L240 564 256 578 272 592 302 616 314 634 312 656 296 644 276 616 256 596 238 572zM310 658L330 660 350 664 374 670 398 680 360 680 330 670zM402 680l42 0-18 4zM454 680l34-2-22 4zM424 688l14 0 2 5-10-2zM456 696L472 684 494 680 478 688 460 698zM340 592L356 594 368 580 386 572 400 554 406 548 424 562 410 568 412 600 416 604 408 622 400 638 388 634 368 632 350 626 344 610zM434 600l6-2 16 2 20-4-8 6-22 4-10 10 6 8 14-8-2 4-10 8 6 12 10 8 0 8-12-10-4-16-8 6 0 20-8 0 2-20-4-6 6-18zM500 586l8 6-2 10-8 10 0-16zM486 634l14-2 14 2 10 4-20-1zM524 612L542 610 556 620 554 634 568 632 584 618 606 624 632 632 652 640 668 656 660 662 668 674 682 684 692 694 676 692 658 682 646 672 634 674 626 684 610 684 596 674 586 674 594 666 588 654 566 644 542 640 556 634 538 622zM674 656l22 2 12-14-2 14-14 4zM728 654l8 10-4-2zM746 662l12 6-10 0zM766 678l12 2 6 6-12-2zM784 690l10 8-10-4zM832 734l4 6-3 10zM840 750l6 0-2 6zM808 782l14 8 12 12-12-6zM922 762l8-6 2 4-6 5zM932 750l12-5-4 6zM200 490l3 0-3 26zM206 542h2v5h-2z"/>
    <path d="M624 698L634 712 638 732 650 738 658 768 680 782 692 802 714 824 718 860 712 884 698 910 688 934 688 952 670 954 656 966 644 958 632 964 608 956 600 940 596 930 588 926 586 904 578 916 568 924 560 910 552 898 524 890 490 892 468 912 430 916 410 926 392 920 396 906 396 884 384 854 376 836 378 802 392 792 420 784 444 776 456 756 470 742 484 728 500 730 510 738 520 718 540 708 524 706 546 704 558 712 576 714 566 734 590 748 608 760 614 744 616 716zM638 976l2 4 10 10 14 2 11-2-2 14-8 14-14 2-8-14zM882 920L896 934 900 948 912 954 930 954 928 968 914 978 908 994 900 992 904 980 892 968 902 962 898 944zM880 986L894 988 894 998 878 1020 860 1042 846 1056 832 1050 838 1036 856 1022 872 1004zM838 1058l6 2-2 3zM33 1141h5v3h-5zM0 1086l10 6-10 2zM825 1108l3 4h-3z"/>
    </g>
  </g>
  <g class="water">
    <path d="M780 66l10-10 14 0 4 30 12 14-8 8-10-14-6-12zM854 154L868 140 886 136 896 128 904 132 916 132 914 146 894 144 872 150zM892 210L890 182 904 164 920 166 908 180 904 210zM912 152L936 160 956 170 954 180 942 178 940 196 936 190 928 176 918 166zM930 212l18-10 18-4 22-10-20 14-32 12zM675 216l6-2 6 10-6 0zM710 34h8v4h-8zM748 42l8-2v4h-8zM880 110l8-3 2 12-10-2zM1000 160l6-3 0 4zM1044 742l8 0-2 10zM1102 878l10-2 0 8zM1026 514l8 2-2 12-6-4zM1102 540l5 2-2 4zM1080 50l8-4-2 8zM960 146l12-3-4 8zM890 12l12 2-6 4z"/>
    <g transform="translate(1452)"><path d="M444 158L460 158 470 168 482 176 502 172 490 162 522 150 516 162 508 172 532 188 546 206 540 214 510 220 482 216 458 220 428 218 430 200 438 176zM596 170L610 158 638 152 642 164 626 172 624 184 642 200 650 212 638 222 632 234 650 244 650 268 610 264 606 240 612 226 604 216 598 200 590 182zM460 606l20 0-2 18-18 4-2-10zM818 156l14-4-8 16zM836 156l28-2-12 4zM876 154l14 4-4 6zM686 158l16-5 10 4-10 4zM840 204l18-1-6 4zM466 120l8 2-4 4zM600 62l4 6-2 4zM608 44l10-6-8 8zM554 278h4v6h-4zM562 225l6 4-2 6zM496 570l4 8-2 4zM460 672l8 4-4 2zM342 618l8 3-4 4zM504 501l6 0-2 4zM184 532l6 4-2 12z"/></g>
    <g transform="translate(2232)"><path d="M344 30l2 16-14 24-18 18-20 4 2-4 20-10 18-20zM38 164l4-8 10-2-10 16zM56 154h28v3H56zM58 204l18 0-8 5zM276 22h6v14h-6zM284 46l6 10-4 0zM184 40l8 0-4 14zM494 48l12-3-2 8-8 0zM100 44l14-6-6 8zM194 102l12 3-4 6-8 0zM262 90h6v13h-6zM404 124h10v6h-10zM118 134l12 2-2 4zM148 208l8 1-2 4zM166 258l10 2-6 2zM258 263l10 2-2 6zM398 346l6 0 0 5zM168 318l6 4-6 4zM434 320l10 8-4 4zM504 801l8 0-2 4zM564 768l5 2-3 2zM426 865l6 1-3 4zM576 854l8 0-2 6zM578 880l4 0-2 4zM536 172l6 2-2 6z"/></g>
  </g>
  <g class="rivers">
    <path d="M1096 610l20 4 14 10 24 2 20 8 16-14 14-4M1142 666l20-22 28-12M1190 654v20M750 140l18-4 14 16 2 24-8 6M1188 806l10-10"/>
    <g transform="translate(1452)"><path d="M466 338l14 20M460 410l8-8v-16M548 140l12-8M584 302l-14 6"/></g>
    <g transform="translate(2232)"><path d="M288 72l-8-30M92 60l16-12M560 124l18-16M366 348l14-4"/></g>
  </g>
  <g class="borders">
    <path d="M510 6L518 18 530 26 532 42M592 124H832L844 132 880 136 906 146 928 160 940 176 938 212 966 202 990 186 1004 174 1032 174 1046 148 1060 148 1066 172M642 310L662 312 690 324 716 324 726 318 740 322 756 346 770 340 780 344 792 362 808 376M854 478L862 466 860 452H882L880 482 896 490 912 480 930 476M858 466L868 464M880 482L886 470 886 448M900 494L914 484M910 512L928 512M936 518V532M978 530L982 544M1030 436V450"/>
    <g transform="translate(852)"><path d="M176 504L164 522 172 540 190 546 214 556 214 590 196 594 190 606 190 628M214 556L212 592 232 598 246 590 240 574 262 572 274 560 268 546 276 534M272 562L280 588 292 594 302 588 296 570 306 558M302 588L326 586V558M326 586L340 586 348 570M116 596L146 608 144 624 126 632 114 646 104 640M146 608L162 612 170 626 190 628 192 640 172 646 160 662 160 676 172 690 186 690 190 702 230 690 234 708 256 718 274 724 276 744 290 746 298 760 296 800M188 698L202 704 198 756 190 764M198 756L204 780 212 806 226 798 254 802 258 786 264 776 294 776M254 802L270 814 296 828 296 846 312 850 326 842 330 830 320 812 308 800 296 798M326 842L300 876 292 896 290 914M300 876L318 886 334 900 334 912M212 806L206 846 190 870 186 892 192 914 184 944 178 980 174 1010 180 1036 172 1066 172 1088 164 1104 172 1112 172 1126 202 1130V1168L226 1170"/></g>
    <g transform="translate(1452)"><path d="M172 284L178 314 156 324 142 338 116 348V362M44 418H78L86 390 90 376H116V364M116 366H90V376M116 362L226 438 224 472 190 476 162 490 144 516M132 386H146L134 388 142 472H88L70 464 48 464M226 438L290 400 272 382V322L258 300 260 268M290 400L318 406 402 434V322M402 412H504M318 406L326 418 320 462 306 480 308 492M392 434L390 470 380 490 380 512 352 530 320 540 306 514M308 492L320 520 314 548 326 576M308 492L280 490 222 488 212 504V552M308 494L300 516 284 532 266 564M198 508L204 518 202 552M192 512V550M162 512H194L196 500 216 486M162 512L164 560M144 516L118 516 116 504 90 502 88 476M46 488H72M46 498H72M66 504L90 502M118 516L124 566M116 504L96 518 76 526M124 540L108 538 98 552M272 586H312L314 596 308 622 288 632M286 586V598H270M288 640L312 644 334 626 342 604 346 570 326 576 312 600M346 570L380 566 402 562 424 562 386 512M300 656H326L336 672 368 668 374 700H396V716H376V746L388 760M380 512L396 530 430 522 462 524 470 502 476 520 472 540 490 566 452 574 424 562M476 520L482 494 500 480 520 480 540 490 556 498M556 510L554 528 600 542 576 566 540 572V620M606 510V540L580 566M498 566L490 566M454 574L486 574 484 590 476 612 448 616 446 590 452 574M476 612L524 644M438 616L440 650 452 678 434 680 434 704 442 720 428 716 396 700M452 678L474 686 470 722 446 734 422 758 388 762M474 686L486 706 534 698M474 722L486 732 494 750 482 750 480 732 466 726M290 756L370 758 408 762 446 738 466 744 470 776 460 800 440 800 420 784 406 762M368 762V796L358 798V862L330 858M358 838L370 844 386 830 410 830 440 800M460 800L462 834M452 834L462 834 466 846 452 848zM422 872L434 862 438 872 428 880zM112 208L134 212 128 262M174 198L214 206M206 98L220 108 240 120 246 64M220 92L240 100M240 120L256 126 252 140 242 156 250 166 256 158 280 152 296 148 330 140 330 152 306 158 282 154M250 166L248 186M310 56L314 90 348 104 382 120 392 86 386 52 364 50M252 140L278 148 300 142 300 128 294 112 314 98M294 112L320 124 344 118 376 124 378 136 344 134 330 140M376 20L412 24 424 30 412 56 390 66M424 30L428 6M424 30L444 32 456 60 466 66 462 84 390 92M382 120L384 138 402 138 430 132 444 150 440 168M430 132L442 158M384 138L364 166 372 184 400 190 428 184M364 166L340 164 320 158M310 160L318 176 338 182 350 204 362 214 368 234M338 166L352 180 354 200 366 204 378 186 374 208 416 216 414 226M362 224L378 216 398 222M464 84L498 92 528 114 530 130 510 138M542 190L566 202 596 216M546 218L570 222 584 244 600 246M562 202L576 220 582 240M546 218L572 234 568 262 498 268M568 262L578 280 582 300 600 336 600 348 574 346 540 330 520 318 500 330 494 346M540 262L534 290 496 320 486 346 510 340 510 322M604 160V144L590 138 588 116 602 98 622 90 642 100 682 102 710 98 714 62 744 48 780 40 794 42 796 54 814 64 844 54 870 98 900 100M668 216V176L688 170 710 188 748 194 766 218 778 224M668 216L684 206 708 210 756 256 770 262M650 254L668 250 700 264 732 278 770 262 798 258 820 268 848 282M708 284L706 310 712 336 744 342 766 338 780 314 796 298 800 276 822 264M708 340L720 352 726 380M778 222L786 206 802 200 830 204 864 204 876 188 880 176 898 160M770 238L800 240 824 244 844 222 876 208M778 224L792 232 812 222 796 216zM848 280L862 306 866 328 890 338M848 282L834 292 824 290 822 304 830 312 812 340 800 358 782 360 780 370 790 376 794 392 776 392M632 392L636 402 660 406 664 384M660 406L664 432 636 444 600 452 562 456 556 464M636 444L640 462M876 334L876 346 898 360"/></g>
    <g transform="translate(2232)"><path d="M0 38L12 38 18 48 36 52 42 60 64 50 92 98 116 98 140 114 156 124 180 106 196 102 212 108 242 104 252 86 266 96 292 92 312 106 336 120 372 122 396 110 420 114 436 84 438 72 458 64 484 70 496 88 500 112 516 122 526 138 560 134 550 168 530 176 528 198 498 218 484 226 468 234M156 124L182 144 184 170 212 184 232 202 276 206 304 214 350 200 362 178 400 164 410 152 430 152 424 144 396 136 402 114M156 124L140 148 118 150 114 170 94 176 98 206 70 220 42 232 50 262 66 284 80 290 84 326 102 334 118 338 140 352 162 362 190 370 218 346 232 344 250 364 244 388 256 398 270 418M94 338L98 350 126 364 162 374 164 358 140 354M162 360L184 358 196 358 194 370 168 370 164 412M168 382H190L192 396 200 418M168 380L172 366M238 352L222 366 214 392 206 408 200 418M270 418L244 436 242 448 256 470 250 490 258 500 252 520M270 418L286 406 312 402 328 414M270 418L276 426 270 450 290 446 300 450 306 470 318 482 286 484 284 494 290 508M280 410L282 422 298 424 304 440 324 462 326 492 314 508 304 516M252 536L264 550 282 560M342 594L364 598 382 594 390 580 398 566 414 568M612 626V684M484 258L504 250M384 570L400 560"/></g>
  </g>
  </svg>
  <div class="zoom"><button>+</button><button>−</button></div>
  <div class="attrib"><i></i><span>Leaflet</span></div>
  </div>
</section>
<div class="scrollbar"><i class="up"></i><i class="thumb"></i><i class="down"></i></div>
</div>
</main>
</div>
</div>
</body>
</html>
```
FILE: styles.css
```
* { box-sizing: border-box; }
body { margin: 0; overflow: hidden; font-family: "Noto Sans", sans-serif; color: #222; }
i { font-style: normal; }
svg { display: block; flex: none; }
.defs { position: absolute; width: 0; height: 0; }
.desktop { width: 1366px; height: 768px; display: flex; flex-direction: column; overflow: hidden; }

.panel { height: 27px; flex: none; background: #1d1d1d; color: #f2f2f2; display: flex; align-items: center; position: relative; font-size: 14px; padding: 0 13px 0 12px; }
.activities { width: 97px; letter-spacing: .3px; }
.panel-app { width: 16px; height: 16px; margin-right: 6px; }
.app-name { width: 104px; white-space: nowrap; }
.caret { border: 5px solid transparent; border-top: 5px solid #f2f2f2; border-bottom: 0; margin-left: 5px; }
.clock { position: absolute; left: 675px; top: 3px; display: flex; align-items: center; gap: 13px; letter-spacing: -.15px; }
.clock span { width: 89px; white-space: nowrap; }
.clock b { width: 8px; height: 8px; border-radius: 50%; background: #eee; }
.tray { margin-left: auto; display: flex; align-items: center; gap: 12px; }
.tray .caret { margin-left: 0; }

.workspace { flex: 1; min-height: 0; display: flex; }
.dock { width: 72px; flex: none; background: linear-gradient(#421f27, #311731 45%, #23141f); display: flex; flex-direction: column; align-items: center; padding-top: 4px; }
.dock-item { width: 64px; height: 64px; margin-bottom: 4px; flex: none; display: flex; align-items: center; justify-content: center; border-radius: 4px; position: relative; }
.dock-item svg { width: 48px; height: 48px; }
.dock-item.active { background: #584253; }
.shop svg { margin-top: -4px; }
.on1::before, .on4::before { content: ""; position: absolute; left: 0; top: 29px; width: 6px; height: 6px; border-radius: 50%; background: #e95420; }
.on4::before { top: 16px; box-shadow: 0 8.700px #e95420, 0 17.400px #e95420, 0 26px #e95420; }
.apps { display: grid; grid-template-columns: repeat(3, 6px); gap: 6px; margin-top: 6px; }
.apps i { width: 6px; height: 6px; border-radius: 1.500px; background: #f2efee; }

.browser { flex: 1; min-width: 0; background: #fff; display: flex; flex-direction: column; }
.tabs { height: 34px; background: #f1c8ff; display: flex; align-items: center; padding-left: 9px; flex: none; }
.tab { width: 27px; height: 20px; border-right: 1px solid #8d7595; display: flex; align-items: center; padding-left: 5px; flex: none; }
.tab.w { width: 28px; padding-left: 6px; }
.tab.last { border: 0; width: 22px; }
.tab svg { width: 16px; height: 16px; }
.count { width: 16px; height: 16px; border-radius: 50%; background: #367ff0; color: #fff; font: 600 8px/16px "Noto Sans", sans-serif; letter-spacing: -.3px; text-align: center; }
.tab-open { align-self: stretch; width: 32px; margin-left: 4px; background: #fff; border-radius: 8px 8px 0 0; display: flex; align-items: center; justify-content: center; position: relative; }
.tab-open::before, .tab-open::after { content: ""; position: absolute; bottom: 0; width: 8px; height: 8px; }
.tab-open::before { left: -8px; background: radial-gradient(circle at 0 0, #f1c8ff 7.500px, #fff 8px); }
.tab-open::after { right: -8px; background: radial-gradient(circle at 100% 0, #f1c8ff 7.500px, #fff 8px); }
.tab-open svg, .winctl svg { width: 16px; height: 16px; }
.newtab { width: 16px; height: 16px; margin-left: 14px; }
.winctl { margin-left: auto; margin-right: 10px; display: flex; gap: 17px; }
.winctl svg:first-child { margin-right: 6px; }

.toolbar { height: 38px; flex: none; display: flex; align-items: center; padding: 0 13px 0 14px; }
.toolbar svg { width: 16px; height: 16px; margin-right: 16px; }
.toolbar > svg:nth-child(3) { margin-right: 14px; }
.omnibox { width: 1046px; height: 30px; border-radius: 15px; background: #e0e0e0; display: flex; align-items: center; padding-left: 10px; margin-right: 14px; flex: none; }
.omnibox svg { margin-right: 8px; }
.url { flex: 1; font-size: 14px; letter-spacing: -.15px; margin-top: -1px; }
.url i { color: #6b6d70; }
.omnibox .share { margin-right: 16px; }
.omnibox svg:last-child { margin-right: 10px; }
.toolbar .side { margin-right: 13px; }
.avatar { width: 22px; height: 22px; border-radius: 50%; background: #728f9e; color: #eee; font-size: 12px; line-height: 22px; text-align: center; margin-right: 13px; }
.toolbar .more { margin: 0; }

.bookmarks { height: 33px; flex: none; border-bottom: 1px solid #cfcfcf; display: flex; align-items: center; padding: 0 0 5px 14px; white-space: nowrap; font-size: 14px; }
.bm { display: flex; align-items: center; gap: 8px; flex: none; }
.bm svg { width: 16px; height: 16px; }
.wide { letter-spacing: .25px; }
.wider { letter-spacing: .48px; }
.b75 { width: 75px; } .b154 { width: 154px; } .b79 { width: 79px; } .b77 { width: 77px; } .b100 { width: 100px; } .b150 { width: 150px; } .b32 { width: 32px; } .b146 { width: 146px; } .b142 { width: 142px; }
.overflow { margin-left: 42px; }

.page { flex: 1; min-height: 0; display: flex; overflow: hidden; font-family: Lato, sans-serif; }
.sidebar { width: 184px; flex: none; border-right: 1px solid #e6e6e6; }
.brand { height: 48px; line-height: 47px; text-align: center; font-size: 20px; font-weight: 500; color: #7b0e9b; letter-spacing: .25px; -webkit-text-stroke: .3px #7b0e9b; }
.sidebar h4 { margin: 13px 0 3px 10px; height: 20px; line-height: 20px; font-size: 10.500px; font-weight: 400; color: #999; letter-spacing: -.15px; }
.sidebar h4.users { margin-top: 12px; }
.item { height: 44px; display: flex; align-items: center; padding-left: 20px; fill: #8c0bff; color: #858585; font-size: 14px; letter-spacing: -.4px; gap: 11px; }
.item.tall { height: 45px; }
.item svg { width: 24px; height: 24px; position: relative; top: 1px; }
.item span { margin-top: -2px; }
.item.blue { fill: #4a00ff; }
.item.blue, .item.dev { gap: 10px; }
.dev text { font: 700 7px "Liberation Mono", monospace; fill: #fff; letter-spacing: 0; }

.content { width: 1095px; flex: none; }
.navbar { height: 70px; border-bottom: 1px solid #e6e6e6; display: flex; align-items: center; padding: 18px 40px 0 20px; justify-content: space-between; }
.search { width: 211px; height: 32px; border: 1px solid #d0d0d0; display: flex; align-items: center; justify-content: space-between; padding: 0 4px; font-size: 12px; color: #888; }
.search span { margin-top: 2px; }
.search svg { width: 23px; height: 23px; }
.actions { display: flex; gap: 20px; align-items: center; fill: #555; color: #666; }
.actions svg { width: 20px; height: 20px; }
.lang { display: flex; align-items: center; font-size: 14px; letter-spacing: .4px; }
.lang span { width: 46px; white-space: nowrap; }
.alert { position: relative; }
.alert b { position: absolute; left: 10px; top: -5px; width: 15px; height: 15px; border-radius: 50%; background: red; color: #fff; font-size: 10px; line-height: 14px; text-align: center; }

.cards { display: flex; gap: 20px; padding: 20px; }
.card { flex: 1; height: 100px; border-radius: 10px; background: #fff; box-shadow: 2px 4px 10px 1px rgba(0,0,0,.47); display: flex; justify-content: space-between; align-items: flex-end; padding: 10px; }
.card:first-child { flex: 0 0 248px; }
.info { align-self: stretch; display: flex; flex-direction: column; align-items: flex-start; }
.info h3 { margin: 0; height: 20px; font-size: 14px; line-height: 20px; font-weight: 500; color: #a0a0a0; letter-spacing: -.05px; white-space: nowrap; }
.info strong { font-size: 28px; line-height: 34px; font-weight: 300; margin: 3px 0 6px 0; letter-spacing: .3px; -webkit-text-stroke: .25px #222; }
.info strong.low { margin-top: 11px; }
.info a { font-size: 12px; line-height: 17px; height: 19px; border-bottom: 1px solid #777; color: #555; letter-spacing: .17px; }
.badge { width: 28px; height: 28px; border-radius: 5px; background: #d9a9d8; display: flex; align-items: center; justify-content: center; fill: #22212a; margin-bottom: 2px; }
.badge svg { width: 18px; height: 18px; }
.badge.red { fill: #ed0931; }

.map { height: 400px; position: relative; overflow: hidden; background: #a3d3e0; }
.world { width: 1095px; height: 400px; }
.land { fill: #f2efe9; stroke: #f2efe9; stroke-width: 1; }
.water { fill: #a3d3e0; }
.rivers { fill: none; stroke: #c5e0e4; stroke-width: 2; }
.borders { fill: none; stroke: #d0b3c9; stroke-width: 2.800; stroke-linejoin: round; }
.zoom { position: absolute; left: 10px; top: 10px; width: 34px; height: 64px; border: 2px solid #809fab; border-radius: 4px; overflow: hidden; }
.zoom button { width: 30px; height: 30px; display: block; border: 0; background: #fff; padding: 1px 0 0 1px; font: bold 22px/30px "Liberation Sans", sans-serif; color: #000; }
.zoom button:first-child { border-bottom: 1px solid #ccc; }
.attrib { position: absolute; right: 0; bottom: 0; width: 58px; height: 16px; background: #e4f1f6; display: flex; align-items: center; gap: 2px; padding: 0 0 2px 5px; font-size: 11px; color: #2583ad; letter-spacing: .15px; }
.attrib i { width: 12px; height: 8px; margin-top: 2px; background: linear-gradient(#4c5fe6 50%, #f5da00 50%); }

.scrollbar { width: 15px; flex: none; background: #f1f1f1; display: flex; flex-direction: column; align-items: center; }
.up { border: 4px solid transparent; border-top: 0; border-bottom: 4px solid #a3a3a3; margin: 6px 0 5px; }
.thumb { width: 11px; height: 497px; background: #c1c1c1; }
.down { border: 4px solid transparent; border-bottom: 0; border-top: 4px solid #505050; margin: auto 0 6px; }
```
